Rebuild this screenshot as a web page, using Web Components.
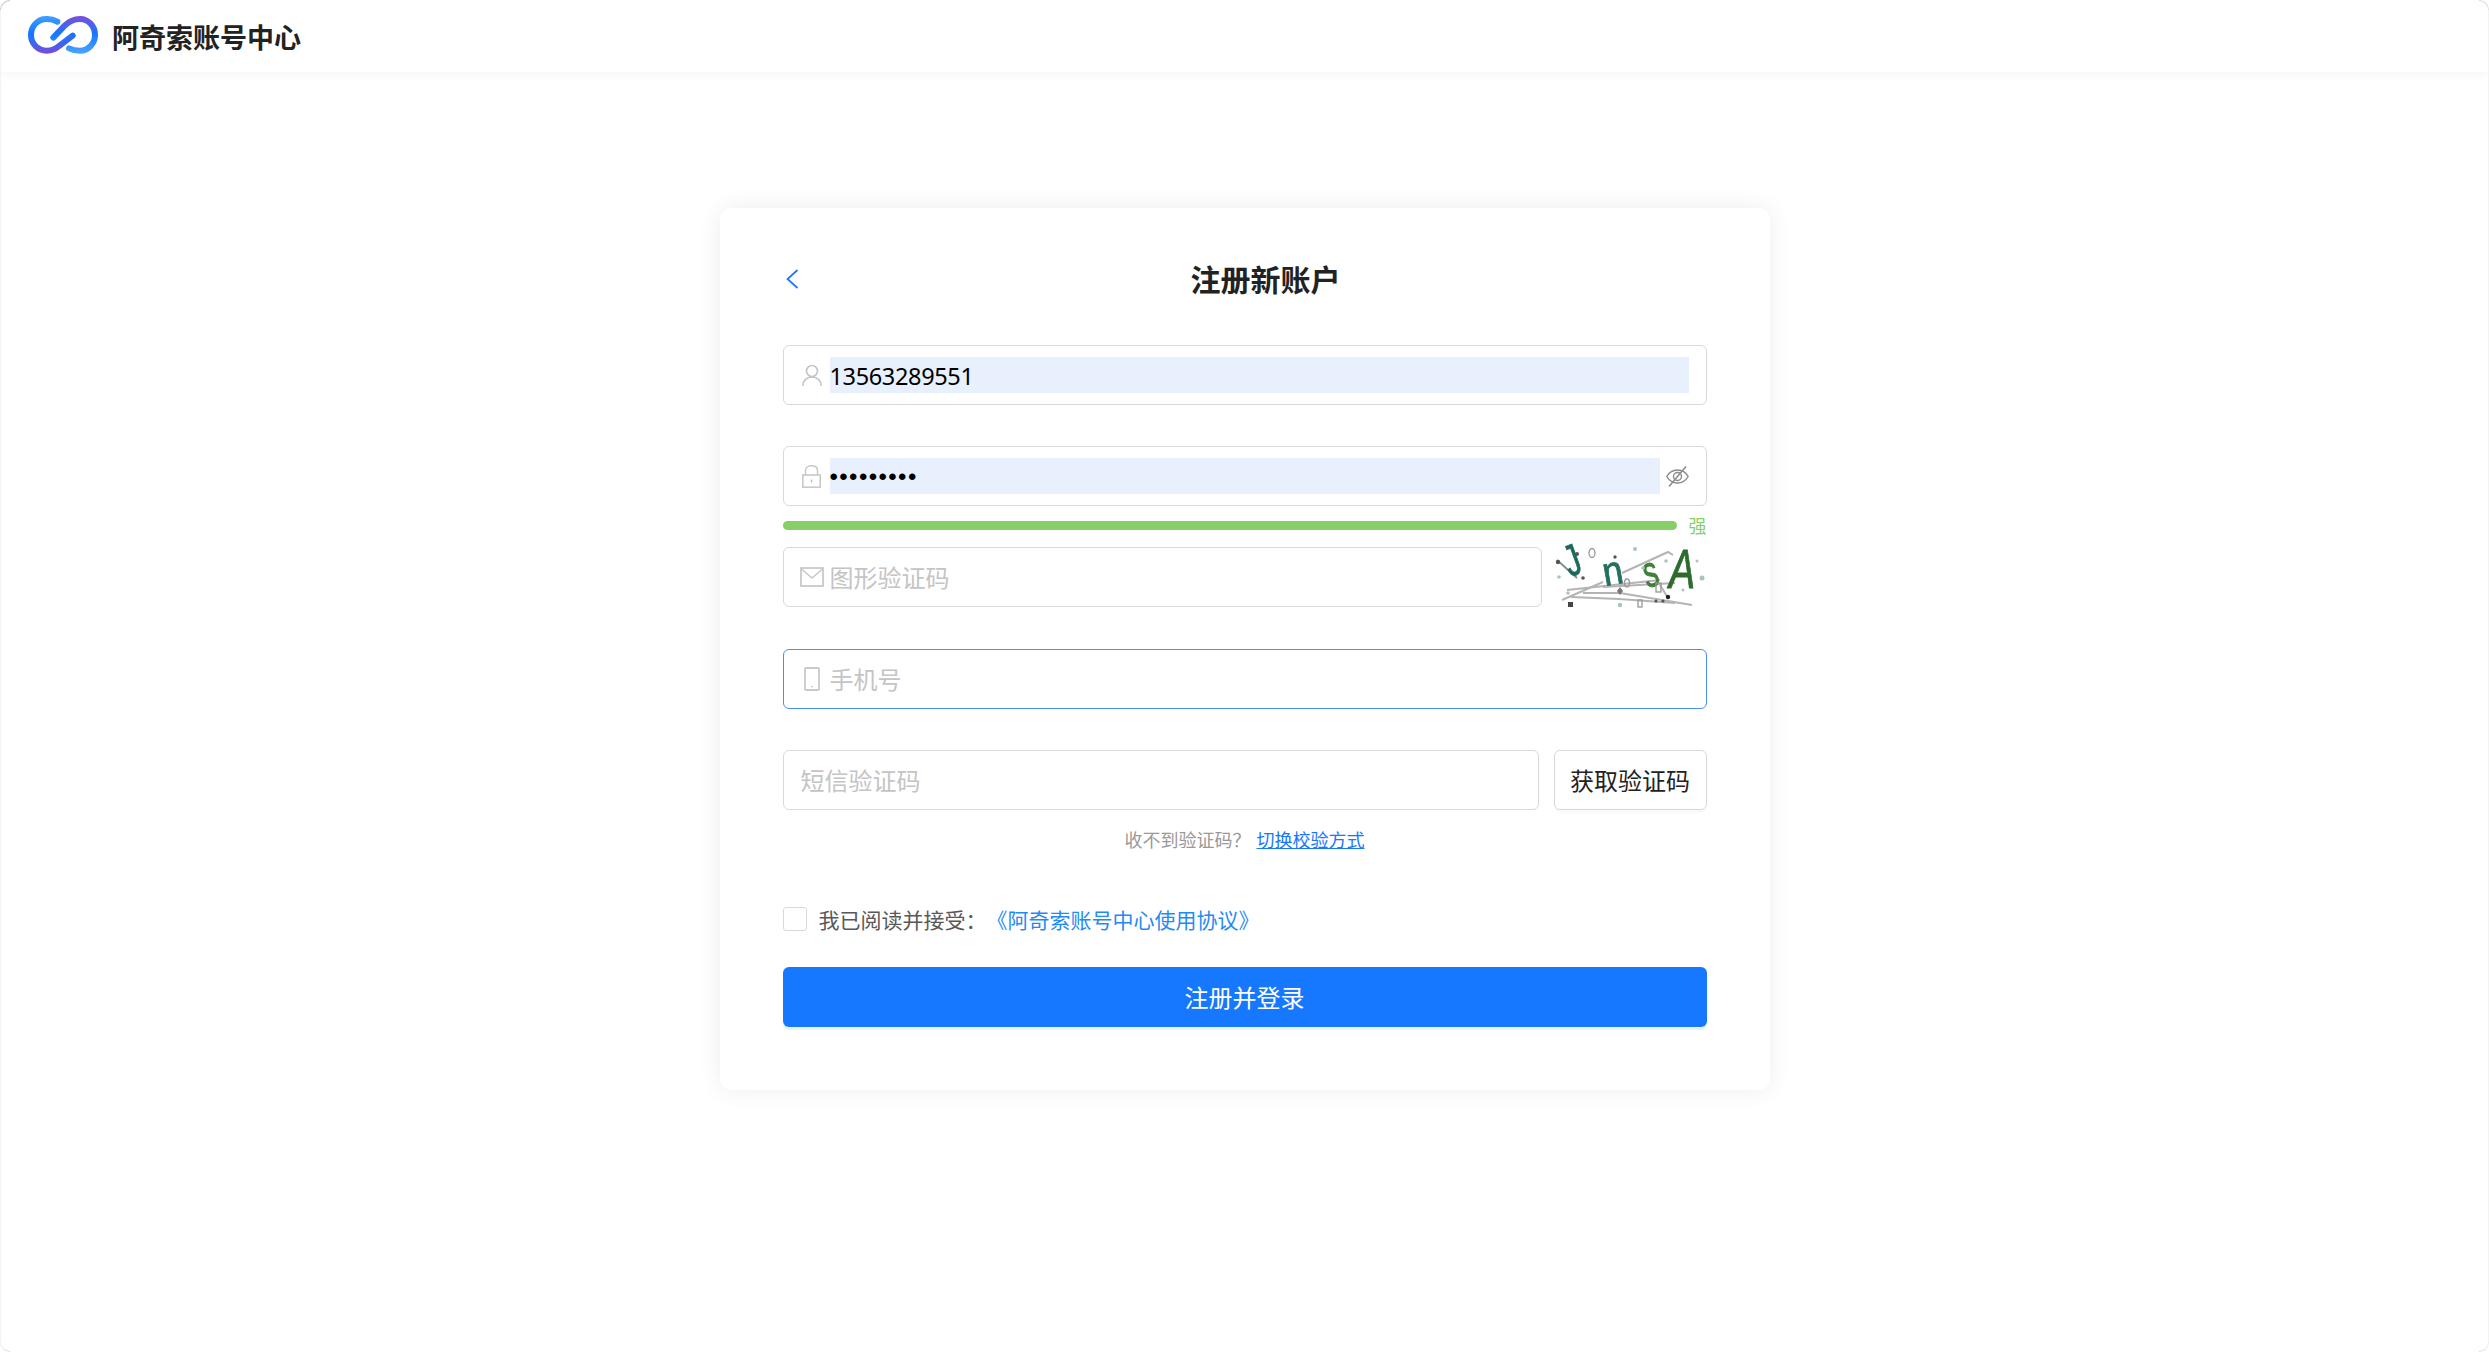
<!DOCTYPE html>
<html lang="zh-CN">
<head>
<meta charset="utf-8">
<title>阿奇索账号中心</title>
<style>
  html,body{margin:0;padding:0;background:#fff;}
  body{font-family:"Noto Sans CJK SC","Noto Sans",sans-serif;width:2489px;height:1352px;overflow:hidden;position:relative;}
</style>
</head>
<body>
<template id="t-header">
  <style>
    :host{display:flex;align-items:center;height:72px;background:#fff;box-shadow:0 3px 10px rgba(0,0,0,.04);padding-left:24px;gap:8px;position:relative;z-index:1;
      font:700 27px "Noto Sans CJK SC",sans-serif;color:#222;}
    svg{width:80px;height:50px;display:block;}
  </style>
  <svg viewBox="0 0 240 150" aria-hidden="true">
    <defs>
      <linearGradient id="ga" gradientUnits="userSpaceOnUse" x1="0" y1="18" x2="0" y2="126">
        <stop offset="0" stop-color="#3d9dff"/><stop offset=".45" stop-color="#1677ff"/><stop offset=".72" stop-color="#3b66ee"/><stop offset="1" stop-color="#7c49da"/>
      </linearGradient>
      <linearGradient id="gb" gradientUnits="userSpaceOnUse" x1="0" y1="18" x2="0" y2="126">
        <stop offset="0" stop-color="#7a4fdc"/><stop offset=".45" stop-color="#1677ff"/><stop offset="1" stop-color="#4aa3ff"/>
      </linearGradient>
    </defs>
    <path d="M100 32C88 25 75 23 64 24C39 26 21 47 21 72C21 98 42 119 68 119C85 119 97 112 105 105L146 74" fill="none" stroke="url(#ga)" stroke-width="18" stroke-linecap="round"/>
    <path d="M88 80L122 44C135 31 152 24 168 24C193 24 213 45 213 72C213 98 193 119 168 119C156 119 145 117 135 112" fill="none" stroke="url(#gb)" stroke-width="18" stroke-linecap="round"/>
  </svg>
  <slot></slot>
</template>

<template id="t-card">
  <style>
    :host{display:block;box-sizing:border-box;width:1050px;height:882px;margin:136px auto 0;padding:48px 63px 0;background:#fff;border-radius:12px;box-shadow:0 0 24px rgba(0,0,0,.075);}
  </style>
  <slot></slot>
</template>

<template id="t-title">
  <style>
    :host{display:flex;align-items:center;height:45px;margin-bottom:44px;}
    .back{width:42px;height:45px;display:flex;align-items:center;}
    svg{width:16px;height:20px;display:block;}
    .t{flex:1;text-align:center;font:700 30px/45px "Noto Sans CJK SC",sans-serif;color:#222;}
  </style>
  <div class="back"><svg viewBox="0 0 16 20" aria-hidden="true"><path d="M14.5 1L4.5 10L14.500 19" fill="none" stroke="#1677ff" stroke-width="1.700"/></svg></div>
  <div class="t"><slot></slot></div>
</template>

<template id="t-field">
  <style>
    :host{display:flex;align-items:center;box-sizing:border-box;height:60px;padding:0 17px 0 18px;background:#fff;border:1.5px solid #d9d9d9;border-radius:6px;font:400 24px "Noto Sans CJK SC",sans-serif;color:#c4c4c4;flex:1;min-width:0;}
    :host([focused]){border-color:#4a90f0;}
    .ic{flex:none;width:20px;height:24px;margin-right:8px;display:flex;align-items:center;justify-content:center;}
    .ic:empty{display:none;}
    svg{display:block;overflow:visible;}
    .val{flex:1;min-width:0;height:36px;line-height:36px;white-space:nowrap;}
    :host([filled]) .val{background:#e8f0fe;color:#000;font-family:"Noto Sans",sans-serif;font-size:23.500px;letter-spacing:-.35px;line-height:38px;}
    :host([secret]) .val{font-family:"Liberation Sans",sans-serif;font-size:24px;letter-spacing:1.400px;line-height:38px;}
    .tail{flex:none;margin-left:6px;display:flex;}
    .tail:empty{display:none;}
  </style>
  <span class="ic"></span><span class="val"><slot></slot></span><span class="tail"></span>
</template>

<template id="t-strength">
  <style>
    :host{display:flex;align-items:center;gap:12px;height:18px;margin:10px 0 13px;font:400 18px/18px "Noto Sans CJK SC",sans-serif;color:#87d068;}
    .bar{flex:1;height:9px;border-radius:5px;background:#87d068;}
  </style>
  <div class="bar"></div><slot></slot>
</template>

<template id="t-row">
  <style>:host{display:flex;align-items:stretch;gap:var(--gap,14px);}</style>
  <slot></slot>
</template>

<template id="t-captcha">
  <style>
    :host{display:block;flex:none;width:150px;height:60px;}
    svg{display:block;width:150px;height:60px;overflow:visible;}
    text{font-family:"Liberation Sans",sans-serif;stroke-width:.9;}
  </style>
  <svg viewBox="0 0 150 60" aria-hidden="true">
    <defs><filter id="b" x="-5%" y="-5%" width="110%" height="110%"><feGaussianBlur stdDeviation=".6"/></filter></defs>
    <g filter="url(#b)">
      <g fill="none" stroke="#b4b4b4" stroke-width="2">
        <path d="M65 26L111 5L116 8"/><path d="M5 53L46 35"/><path d="M10 43L103 33"/><path d="M26 46L63 46L135 58"/><path d="M103 38L111 51"/><path d="M46 40L118 36"/><path d="M14 50L62 52L118 56"/>
      </g>
      <path d="M0 13L20 31" stroke="#7d8f8a" stroke-width="1.800" fill="none"/>
      <text transform="translate(13 30) rotate(-20) scale(.7 1)" font-size="44" fill="#1f6a5c" stroke="#1f6a5c">J</text>
      <text transform="translate(48 39) rotate(-10) scale(.9 1)" font-size="40" fill="#237060" stroke="#237060">n</text>
      <text transform="translate(90 41) rotate(-15) scale(.66 1)" font-size="44" fill="#3f7f36" stroke="#3f7f36">s</text>
      <text transform="translate(112 41) scale(.7 1)" font-size="56" font-style="italic" fill="#2f6b2d" stroke="#2f6b2d">A</text>
      <g fill="#555">
        <rect x="11" y="55" width="5" height="5" fill="#444"/><circle cx="20" cy="7" r="2"/><circle cx="1" cy="15" r="2.200"/><circle cx="58" cy="10" r="1.700"/>
        <path d="M63 40l3 4l-3 4l-3-4Z" fill="#777"/><circle cx="111" cy="50" r="2.200" fill="#222"/><circle cx="106" cy="54" r="1.600"/><circle cx="99" cy="54" r="1.600"/><circle cx="26" cy="31" r="1.800"/>
      </g>
      <g fill="#a9c4bd">
        <circle cx="2" cy="30" r="1.800"/><circle cx="78" cy="2" r="2"/><circle cx="86" cy="21" r="1.800"/><circle cx="109" cy="14" r="1.800"/><circle cx="145" cy="31" r="2.500"/><circle cx="140" cy="14" r="1.500"/><circle cx="126" cy="43" r="1.500"/><circle cx="11" cy="46" r="1.800"/><circle cx="26" cy="44" r="1.600"/><circle cx="63" cy="58" r="2.200"/>
      </g>
      <g fill="none" stroke="#999" stroke-width="1.300"><rect x="99" y="36" width="5" height="9"/><ellipse cx="70" cy="36" rx="2.500" ry="4"/><ellipse cx="35" cy="6" rx="3" ry="4.500"/><rect x="81" y="53" width="4" height="7"/></g>
    </g>
  </svg>
</template>

<template id="t-button">
  <style>
    :host{display:flex;align-items:center;justify-content:center;box-sizing:border-box;height:60px;border-radius:6px;padding-bottom:2px;font:400 24px "Noto Sans CJK SC",sans-serif;}
    :host([primary]){background:#1677ff;color:#fff;box-shadow:0 3px 0 rgba(5,145,255,.1);}
    :host(:not([primary])){flex:none;width:153px;background:#fff;color:#222;border:1.5px solid #d9d9d9;box-shadow:0 3px 0 rgba(0,0,0,.02);}
  </style>
  <slot></slot>
</template>

<template id="t-hint">
  <style>
    :host{display:flex;justify-content:center;gap:6px;height:30px;margin-top:14px;font:400 18px/30px "Noto Sans CJK SC",sans-serif;color:#999;}
    ::slotted(a){color:#1677ff;text-decoration:underline;}
  </style>
  <slot></slot>
</template>

<template id="t-agree">
  <style>
    :host{display:flex;align-items:center;height:30px;margin:50px 0 33px;font:400 21px/30px "Noto Sans CJK SC",sans-serif;color:#595959;}
    .box{flex:none;box-sizing:border-box;width:24px;height:24px;margin-right:12px;border:1.500px solid #d9d9d9;border-radius:3px;background:#fff;}
    ::slotted(a){color:#1f8bf5;text-decoration:none;}
  </style>
  <span class="box"></span><slot></slot>
</template>

<template id="t-corner">
  <style>
    :host{display:block;position:absolute;width:10px;height:10px;z-index:5;box-sizing:border-box;}
    :host([at="tl"]){left:0;top:0;border-top:1.500px solid #c9c9c9;border-left:1.500px solid #c9c9c9;border-top-left-radius:10px;}
    :host([at="bl"]){left:0;bottom:0;border-bottom:1.500px solid #dcdcdc;border-left:1.500px solid #ededed;border-bottom-left-radius:10px;}
    :host([at="tr"]){right:0;top:0;border-top:1.500px solid #dcdcdc;border-right:1.500px solid #dcdcdc;border-top-right-radius:10px;}
    :host([at="br"]){right:0;bottom:0;border-bottom:1.500px solid #dcdcdc;border-right:1.500px solid #ededed;border-bottom-right-radius:10px;}
    :host([at="edge"]){left:0;right:0;top:10px;bottom:10px;width:auto;height:auto;border-left:1px solid #f3f3f3;border-right:1px solid #f3f3f3;}
  </style>
</template>

<ax-corner at="edge"></ax-corner><ax-corner at="tl"></ax-corner><ax-corner at="tr"></ax-corner><ax-corner at="bl"></ax-corner><ax-corner at="br"></ax-corner>
<ax-header>阿奇索账号中心</ax-header>
<ax-card>
  <ax-title>注册新账户</ax-title>
  <ax-field icon="user" filled>13563289551</ax-field>
  <ax-field icon="lock" filled secret tail="eye" style="margin-top:41px">•••••••••</ax-field>
  <ax-strength>强</ax-strength>
  <ax-row style="--gap:15px"><ax-field icon="mail">图形验证码</ax-field><ax-captcha></ax-captcha></ax-row>
  <ax-field icon="phone" focused style="margin-top:42px">手机号</ax-field>
  <ax-row style="--gap:15px;margin-top:41px"><ax-field style="padding-left:17px">短信验证码</ax-field><ax-button>获取验证码</ax-button></ax-row>
  <ax-hint><span>收不到验证码&#xFF1F;</span><a href="#">切换校验方式</a></ax-hint>
  <ax-agree><span>我已阅读并接受&#xFF1A;</span><a href="#">《阿奇索账号中心使用协议》</a></ax-agree>
  <ax-button primary>注册并登录</ax-button>
</ax-card>

<script>
  const ICONS = {
    user:'<svg width="20" height="22" viewBox="0 0 20 22"><circle cx="10" cy="7" r="5.500" fill="none" stroke="#c4c4c4" stroke-width="1.600"/><path d="M.8 22C.8 16.500 4.800 13 10 13S19.200 16.500 19.200 22" fill="none" stroke="#c4c4c4" stroke-width="1.600"/></svg>',
    lock:'<svg width="19" height="23" viewBox="0 0 19 23"><path d="M3.500 10V5.500C3.500 2.500 6 .8 9.500 .8S15.500 2.500 15.500 5.500V10" fill="none" stroke="#c9c9c9" stroke-width="1.500"/><rect x=".8" y="10" width="17.400" height="12.200" fill="none" stroke="#c9c9c9" stroke-width="1.600"/><rect x="8.800" y="14.500" width="1.400" height="3" fill="#bbb"/></svg>',
    mail:'<svg width="24" height="20" viewBox="0 0 24 20"><rect x="1" y="1" width="22" height="18" fill="none" stroke="#c9c9c9" stroke-width="1.800"/><path d="M1.500 2L12 11L22.500 2" fill="none" stroke="#c9c9c9" stroke-width="1.600"/></svg>',
    phone:'<svg width="16" height="24" viewBox="0 0 16 24"><rect x="1" y="1" width="14" height="22" rx="1" fill="none" stroke="#c9c9c9" stroke-width="1.800"/><rect x="7.300" y="19" width="1.400" height="1.400" fill="#bbb"/></svg>',
    eye:'<svg width="23" height="21" viewBox="0 0 23 21"><path d="M.8 10.500C3.500 5.800 7 4 11.500 4S19.500 5.800 22.200 10.500C19.500 15.200 16 17 11.500 17S3.500 15.200 .8 10.500Z" fill="none" stroke="#8a8a8a" stroke-width="1.400"/><circle cx="11.500" cy="10.500" r="4" fill="none" stroke="#8a8a8a" stroke-width="1.400"/><path d="M3 20.500L20 .5" stroke="#8a8a8a" stroke-width="1.500"/></svg>'
  };
  function def(name, tplId){
    customElements.define(name, class extends HTMLElement{
      constructor(){
        super();
        const r = this.attachShadow({mode:'open'});
        r.appendChild(document.getElementById(tplId).content.cloneNode(true));
      }
    });
  }
  def('ax-corner','t-corner');
  def('ax-header','t-header');
  def('ax-card','t-card');
  def('ax-title','t-title');
  def('ax-row','t-row');
  def('ax-strength','t-strength');
  def('ax-captcha','t-captcha');
  def('ax-button','t-button');
  def('ax-hint','t-hint');
  def('ax-agree','t-agree');
  customElements.define('ax-field', class extends HTMLElement{
    constructor(){
      super();
      const r = this.attachShadow({mode:'open'});
      r.appendChild(document.getElementById('t-field').content.cloneNode(true));
    }
    connectedCallback(){
      const r = this.shadowRoot;
      r.querySelector('.ic').innerHTML = ICONS[this.getAttribute('icon')] || '';
      r.querySelector('.tail').innerHTML = ICONS[this.getAttribute('tail')] || '';
    }
  });
</script>
</body>
</html>
